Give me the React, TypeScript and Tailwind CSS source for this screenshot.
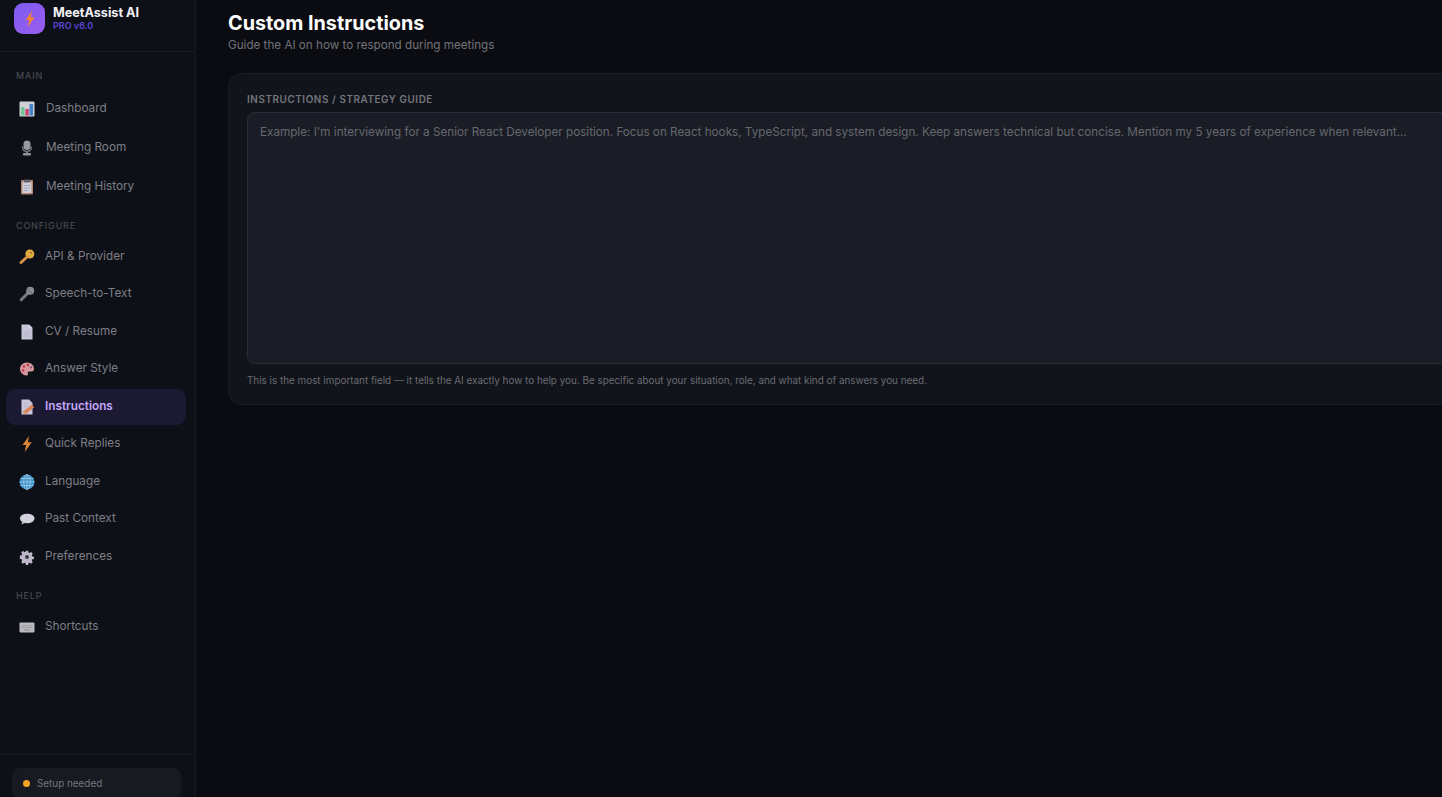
import type { ReactNode } from 'react';

const Icon = ({ children }: { children: ReactNode }) => (
  <svg viewBox="0 0 16 16" className="h-4 w-4 shrink-0 opacity-90">
    {children}
  </svg>
);

const icons: Record<string, ReactNode> = {
  dashboard: (
    <>
      <rect x="0.500" y="0.500" width="15" height="15" rx="1" fill="#e4e6ea" />
      <rect x="2" y="6" width="3.500" height="8.500" fill="#7fd8a8" />
      <rect x="6.300" y="8" width="3.500" height="6.500" fill="#e2497f" />
      <rect x="10.500" y="3" width="3.500" height="11.500" fill="#4a8fe0" />
    </>
  ),
  mic: (
    <>
      <rect x="4.500" y="0.500" width="7" height="9.500" rx="3.500" fill="#a8a8ae" />
      <path d="M3.500 6.500c0 3.600 2 5 4.500 5s4.500-1.400 4.500-5" fill="none" stroke="#85858c" strokeWidth="1.300" />
      <rect x="7" y="11" width="2" height="2.500" fill="#85858c" />
      <rect x="4" y="13" width="8" height="2.500" rx="0.800" fill="#a0a0a6" />
    </>
  ),
  clipboard: (
    <>
      <rect x="2" y="1" width="12" height="14.500" rx="1" fill="#c2917a" />
      <rect x="3.500" y="3" width="9" height="11" fill="#e6e3ee" />
      <rect x="5" y="0.500" width="6" height="3" rx="0.500" fill="#6d6a72" />
      <path d="M5 6.500h6M5 9h6M5 11.500h4" stroke="#b4b8d6" strokeWidth="1" />
    </>
  ),
  key: (
    <>
      <circle cx="10.800" cy="5" r="4.500" fill="#f6bb45" />
      <circle cx="12" cy="3.800" r="1" fill="#a87522" />
      <path d="M8 8 2 13.500" stroke="#ee9f4c" strokeWidth="3" strokeLinecap="round" />
    </>
  ),
  speech: (
    <>
      <path d="M9.500 6.500 2.200 13.800" stroke="#85858d" strokeWidth="3" strokeLinecap="round" />
      <circle cx="11.200" cy="4.800" r="4" fill="#9a9aa2" />
      <path d="M8.300 2.500 13.500 7.700" stroke="#5f5f66" strokeWidth="0.800" />
    </>
  ),
  doc: (
    <>
      <path d="M2.500 0.500h7.500l3.500 3.500v11.500h-11z" fill="#dcd9ec" />
      <path d="M10 0.500v3.500h3.500z" fill="#f0eef8" />
      <path d="M4.500 8h7M4.500 10h7M4.500 12h7" stroke="#c4c0d8" strokeWidth="0.800" />
    </>
  ),
  palette: (
    <>
      <path d="M8 1.500C3.800 1.500 1 4.500 1 8s2.900 6.500 6.500 6.500c1.600 0 1.900-1.100 1.400-2-.5-1 .1-2 1.300-2h2.300c1.500 0 2.500-1 2.500-2.700C15 4.300 12 1.500 8 1.500z" fill="#eda5ab" />
      <circle cx="5" cy="5.500" r="1.200" fill="#c9404f" />
      <circle cx="9" cy="4" r="1.200" fill="#c9404f" />
      <circle cx="4" cy="9.500" r="1.200" fill="#c9404f" />
      <circle cx="12" cy="6.500" r="1.100" fill="#8d4f8f" />
    </>
  ),
  edit: (
    <>
      <path d="M2.500 0.500h7.500l3.500 3.500v11.500h-11z" fill="#dcd9ec" />
      <path d="M4.500 5h5M4.500 7.500h4" stroke="#c0bcd6" strokeWidth="0.800" />
      <path d="M5 14 14 7" stroke="#ef8f58" strokeWidth="3.500" />
      <path d="M3.500 15.500l1.500-3.500 2 2.500z" fill="#e2b48f" />
    </>
  ),
  bolt: <path d="M10 0 3.500 9h3.600L5.800 16 12.800 6.300H8.900z" fill="#f0913c" />,
  globe: (
    <>
      <circle cx="8" cy="8" r="7.500" fill="#3f9fe0" />
      <g fill="none" stroke="#b9e2f8" strokeWidth="0.800">
        <ellipse cx="8" cy="8" rx="3.300" ry="7.500" />
        <path d="M8 .5v15M.5 8h15M1.500 4.500h13M1.500 11.500h13" />
      </g>
    </>
  ),
  bubble: (
    <>
      <ellipse cx="8.200" cy="7.500" rx="7.300" ry="4.800" fill="#e9e6f4" />
      <path d="M3.500 10 2.500 13.500 7 11.500z" fill="#d8d4e8" />
    </>
  ),
  gear: (
    <g transform="translate(1 1) scale(.875)">
      <path
        d="M6.700.8h2.600l.4 2 1.300.6 1.800-1.100 1.800 1.900-1.100 1.700.6 1.400 2 .4v2.600l-2 .4-.6 1.400 1.100 1.700-1.800 1.900-1.800-1.100-1.300.6-.4 2H6.700l-.4-2-1.300-.6-1.800 1.100-1.800-1.900 1.100-1.700-.6-1.400-2-.4V6.300l2-.4.6-1.400-1.100-1.700 1.800-1.900L5 2.500l1.300-.6z"
        fill="#cfcbdc"
      />
      <circle cx="8" cy="8" r="2.200" fill="#3d3b4a" />
    </g>
  ),
  keyboard: (
    <>
      <rect x="0.500" y="3.500" width="15" height="10" rx="1" fill="#cdcdd2" />
      <path d="M2.500 6.500h11M2.500 8.500h11" stroke="#9a9aa2" strokeWidth="1" strokeDasharray="1 .7" />
      <path d="M4.500 11h7" stroke="#9a9aa2" strokeWidth="1" />
    </>
  ),
};

function NavItem({ icon, label, tall, active }: { icon: string; label: string; tall?: boolean; active?: boolean }) {
  return (
    <div
      className={`flex items-center rounded-[9px] px-[13px] text-[11.750px] ${tall ? 'h-[39px] gap-[11px]' : 'h-[36px] gap-[10px]'} ${
        active ? 'bg-[#1c1a33] font-semibold text-[#c3a6f7]' : 'text-[#7d7f86]'
      }`}
    >
      <Icon>{icons[icon]}</Icon>
      <span>{label}</span>
    </div>
  );
}

function SectionLabel({ children }: { children: ReactNode }) {
  return <div className="px-[10px] text-[9px] font-medium leading-[11px] tracking-[0.09em] text-[#46484e]">{children}</div>;
}

export default function App() {
  return (
    <div className="flex h-[797px] w-full overflow-hidden bg-[#0b0c11] font-['Inter',sans-serif]">
      <aside className="flex w-[196px] shrink-0 flex-col border-r border-[#191b22] bg-[#0e1017]">
        <div className="flex h-[52px] shrink-0 gap-[8px] border-b border-[#191b22] pl-[14px] pt-[3px]">
          <div className="flex h-[31px] w-[31px] items-center justify-center rounded-[9px] bg-gradient-to-br from-[#7c5cf0] to-[#9a5cf0]">
            <svg viewBox="0 0 16 16" className="h-4 w-4">
              <path d="M10 0 3.500 9h3.600L5.800 16 12.800 6.300H8.900z" fill="#f0803c" />
            </svg>
          </div>
          <div className="pt-[2px]">
            <div className="text-[12.650px] font-bold leading-[16px] text-[#f2f2f5]">MeetAssist AI</div>
            <div className="text-[9px] font-semibold leading-[10px] text-[#5b45d6]">PRO v6.0</div>
          </div>
        </div>

        <nav className="flex flex-1 flex-col pl-[6px] pr-[9px]">
          <div className="pt-[18px]">
            <SectionLabel>MAIN</SectionLabel>
          </div>
          <div className="mt-[8px]">
            <NavItem tall icon="dashboard" label="Dashboard" />
            <NavItem tall icon="mic" label="Meeting Room" />
            <NavItem tall icon="clipboard" label="Meeting History" />
          </div>
          <div className="mt-[14px]">
            <SectionLabel>CONFIGURE</SectionLabel>
          </div>
          <div className="mt-[7.500px] flex flex-col gap-[1.500px]">
            <NavItem icon="key" label="API & Provider" />
            <NavItem icon="speech" label="Speech-to-Text" />
            <NavItem icon="doc" label="CV / Resume" />
            <NavItem icon="palette" label="Answer Style" />
            <NavItem active icon="edit" label="Instructions" />
            <NavItem icon="bolt" label="Quick Replies" />
            <NavItem icon="globe" label="Language" />
            <NavItem icon="bubble" label="Past Context" />
            <NavItem icon="gear" label="Preferences" />
          </div>
          <div className="mt-[15px]">
            <SectionLabel>HELP</SectionLabel>
          </div>
          <div className="mt-[8px]">
            <NavItem icon="keyboard" label="Shortcuts" />
          </div>
        </nav>

        <div className="h-[43px] shrink-0 border-t border-[#191b22] px-[12px] pt-[13px]">
          <div className="flex h-[30px] w-[169px] items-center gap-[7px] rounded-[8px] bg-[#181a21] px-[11px] text-[9.900px] text-[#74767d]">
            <span className="h-[7px] w-[7px] rounded-full bg-[#f5a524]" />
            Setup needed
          </div>
        </div>
      </aside>

      <main className="min-w-0 flex-1 overflow-hidden pl-[32px] pt-[10px]">
        <h1 className="text-[19.800px] font-bold leading-[26px] text-white">Custom Instructions</h1>
        <p className="mt-[2px] text-[11.670px] leading-[14px] text-[#71737a]">Guide the AI on how to respond during meetings</p>

        <section className="mt-[21px] h-[332px] w-[1280px] rounded-[14px] border border-[#1c1e25] bg-[#12141b] px-[18px] pt-[19px]">
          <label className="block text-[9.870px] font-semibold leading-[12px] tracking-[0.06em] text-[#74767d]">
            INSTRUCTIONS / STRATEGY GUIDE
          </label>
          <textarea
            readOnly
            className="mt-[7px] block h-[252px] w-full resize-none rounded-[8px] border border-[#2a2d35] bg-[#1a1d25] px-[12px] py-[10px] text-[11.700px] leading-[18px] outline-none placeholder:text-[#66686f]"
            placeholder="Example: I'm interviewing for a Senior React Developer position. Focus on React hooks, TypeScript, and system design. Keep answers technical but concise. Mention my 5 years of experience when relevant..."
          />
          <p className="mt-[10px] text-[9.900px] leading-[12px] text-[#696b72]">
            This is the most important field — it tells the AI exactly how to help you. Be specific about your situation, role, and what kind of answers you need.
          </p>
        </section>
      </main>
    </div>
  );
}
